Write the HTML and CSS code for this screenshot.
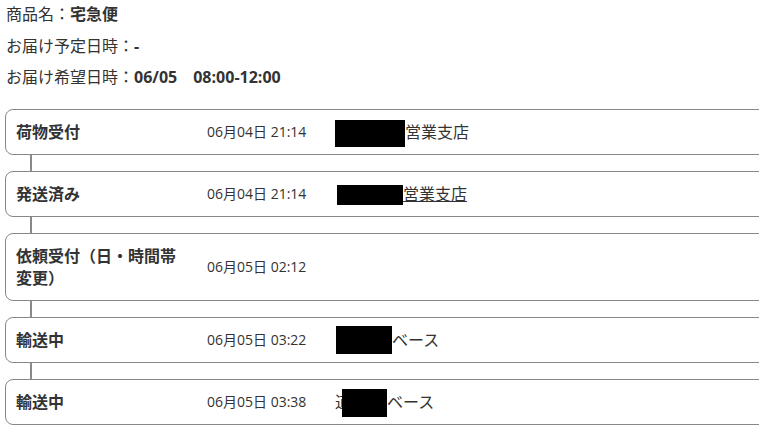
FILE: index.html
```html
<!DOCTYPE html>
<html lang="ja">
<head>
    <meta charset="UTF-8">
    <meta name="viewport" content="width=device-width, initial-scale=1.0">
    <title>配達状況</title>
    <link rel="stylesheet" href="styles.css">
</head>
<body>
    <div class="container">
        <div class="info">
          <p>商品名：<b>宅急便</b></p>
          <p>お届け予定日時：<b>-</b></p>
          <p>お届け希望日時：<b>06/05　08:00-12:00</b></p>
        </div>
        <div class="timeline">
          <div class="card">
            <div class="title">荷物受付</div>
            <div class="date">06月04日 21:14</div>
            <div class="place"><span class="mask mask1"></span>営業支店</div>
          </div>
          <div class="line"></div>
          <div class="card">
            <div class="title">発送済み</div>
            <div class="date">06月04日 21:14</div>
            <div class="place"><span class="mask mask2"></span><a href="#">営業支店</a></div>
          </div>
          <div class="line"></div>
          <div class="card">
            <div class="title">依頼受付（日・時間帯変更）</div>
            <div class="date">06月05日 02:12</div>
            <div class="place"></div>
          </div>
          <div class="line"></div>
          <div class="card">
            <div class="title">輸送中</div>
            <div class="date">06月05日 03:22</div>
            <div class="place"><span class="mask mask4"></span>ベース</div>
          </div>
          <div class="line"></div>
          <div class="card">
            <div class="title">輸送中</div>
            <div class="date">06月05日 03:38</div>
            <div class="place">道<span class="mask mask5"></span>ベース</div>
          </div>
        </div>
    </div>
</body>
</html>
```

FILE: styles.css
```css
html {
  overflow: hidden;
}
body {
  margin: 0;
  font-family: "Open Sans", "Noto Sans CJK JP", sans-serif;
  color: #333;
}
.container {
  padding: 3px 0 0 5px;
}
.info p {
  margin: 0 0 9.5px 1px;
  font-size: 16px;
  line-height: 22px;
}
.info b {
  font-weight: bold;
}
.timeline {
  margin-top: 21px;
  width: 820px;
  display: flex;
  flex-direction: column;
}
.card {
  display: flex;
  align-items: center;
  border: 1px solid #888;
  border-radius: 8px;
  padding: 11px 0 11px 10px;
}
.line {
  width: 2px;
  height: 16px;
  margin-left: 25px;
  background-color: #888;
}
.title {
  width: 191px;
  padding-right: 21px;
  box-sizing: border-box;
  font-size: 16px;
  font-weight: bold;
  line-height: 22px;
}
.date {
  width: 128px;
  font-size: 14px;
  line-height: 22px;
}
.place {
  height: 22px;
  font-size: 16px;
  line-height: 22px;
  display: flex;
  align-items: center;
}
.place a {
  color: #333;
}
.mask {
  flex-shrink: 0;
  display: inline-block;
  background-color: #000;
}
.mask1 {
  width: 70px;
  height: 27px;
  margin-top: 2px;
}
.mask2 {
  width: 66px;
  height: 20px;
  margin-left: 2px;
  margin-top: 2px;
}
.mask4 {
  width: 56px;
  height: 28px;
  margin-left: 1px;
}
.mask5 {
  width: 45px;
  height: 28px;
  margin-left: -9px;
  margin-top: 2px;
}
```
